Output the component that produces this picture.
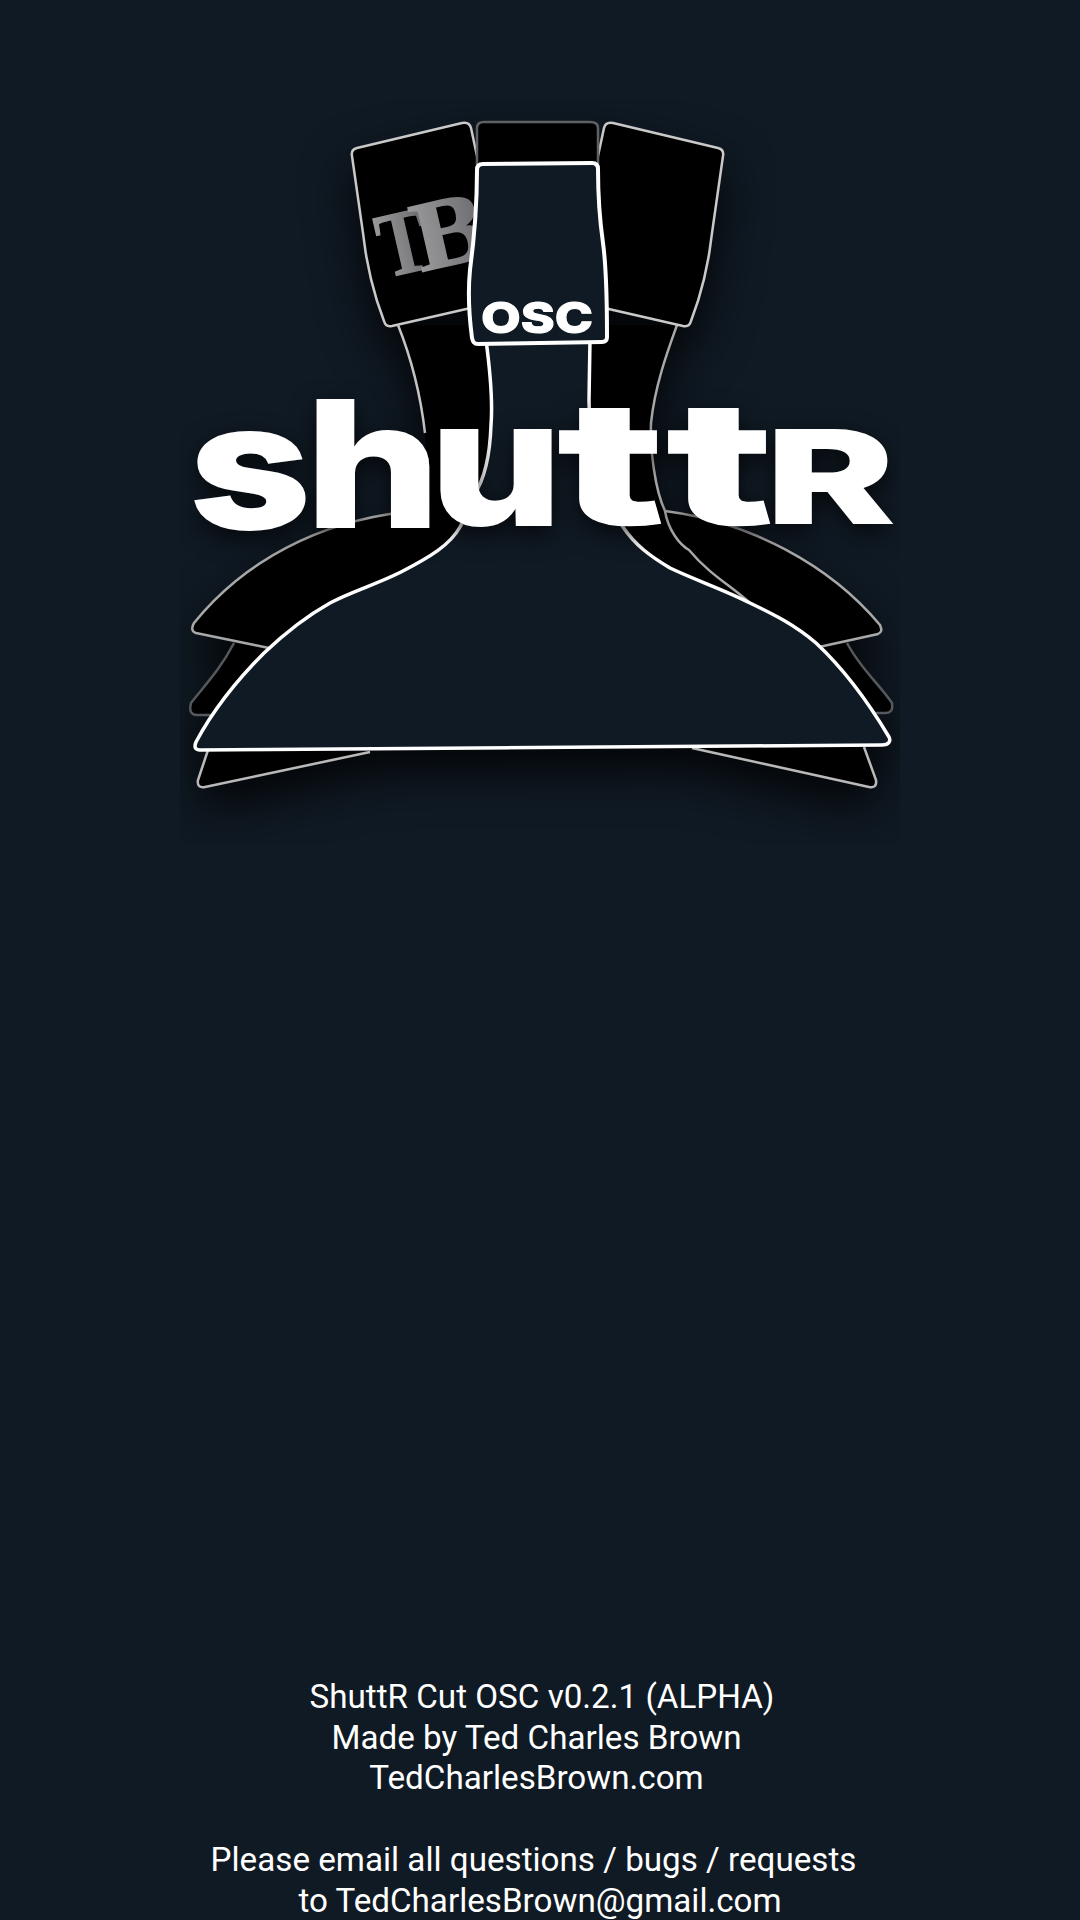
import React from "react";

const BG = "#101a24";

// wordmark letters, each placed and stretched to the logo's box
const LETTERS = [
  { c: "s", x: 189, y: 528, size: 174, w: 122 },
  { c: "h", x: 306, y: 527, size: 174, w: 134 },
  { c: "u", x: 430, y: 525, size: 174, w: 132 },
  { c: "t", x: 558, y: 524, size: 170, w: 106 },
  { c: "t", x: 667, y: 524, size: 170, w: 106 },
  { c: "R", x: 766, y: 523, size: 128, w: 128 },
];

function Logo() {
  return (
    <svg width="1080" height="860" viewBox="0 0 1080 860" className="block">
      <defs>
        <filter
          id="soft"
          filterUnits="userSpaceOnUse"
          x="180"
          y="100"
          width="720"
          height="745"
          colorInterpolationFilters="sRGB"
        >
          <feDropShadow dx="0" dy="22" stdDeviation="24" floodColor="#000" floodOpacity="0.8" />
        </filter>
        <filter
          id="word"
          filterUnits="userSpaceOnUse"
          x="180"
          y="380"
          width="720"
          height="240"
          colorInterpolationFilters="sRGB"
        >
          <feDropShadow dx="0" dy="8" stdDeviation="12" floodColor="#000" floodOpacity="0.7" />
        </filter>
        <linearGradient id="tb" x1="0" y1="0" x2="1" y2="0">
          <stop offset="0" stopColor="#9a9a9c" />
          <stop offset="1" stopColor="#6c6c70" />
        </linearGradient>
      </defs>

      <g filter="url(#soft)">
        {/* lower wings */}
        <path d="M208 748 L198 780 C197 786 200 788 205 787 L370 752 Z" fill="#000" />
        <path d="M370 752 L205 787 C200 788 197 786 198 780 L208 750" fill="none" stroke="#b9b9b9" strokeWidth="2.5" />
        <path d="M864 745 L876 780 C877 786 874 788 869 787 L692 746 Z" fill="#000" />
        <path d="M692 748 L869 787 C874 788 877 786 876 780 L864 747" fill="none" stroke="#b9b9b9" strokeWidth="2.5" />
        <path d="M234 643 C220 670 205 685 191 703 C189 711 191 715 197 715 L225 715 L290 650 Z" fill="#000" />
        <path d="M234 643 C220 670 205 685 191 703 C189 711 191 715 197 715 L225 715" fill="none" stroke="#55585c" strokeWidth="2.5" />
        <path d="M847 643 C860 668 880 685 892 703 C893 710 891 713 885 713 L855 713 L800 650 Z" fill="#000" />
        <path d="M847 643 C860 668 880 685 892 703 C893 710 891 713 885 713 L855 713" fill="none" stroke="#55585c" strokeWidth="2.5" />

        {/* black band behind the body */}
        <path d="M398 325 C408 350 420 390 425 433 L430 512 L404 512 C320 522 245 560 194 623 C191 628 192 632 196 633 L269 650 L500 560 L500 325 Z" fill="#000" />
        <path d="M677 325 C668 350 655 385 651 423 C650 450 655 490 665 511 C750 522 830 565 880 625 C882 630 882 632 878 634 L819 647 L600 560 L585 325 Z" fill="#000" />
        <path d="M398 325 C408 350 420 390 425 433" fill="none" stroke="#c4c4c4" strokeWidth="2.5" />
        <path d="M404 512 C320 522 245 560 194 623 C191 628 192 632 196 633 L269 648" fill="none" stroke="#a8a8a8" strokeWidth="2.5" />
        <path d="M677 325 C668 350 655 385 651 423 C650 450 655 490 665 511 C668 530 680 545 689 550 C710 575 730 585 750 603" fill="none" stroke="#a8a8a8" strokeWidth="2.5" />
        <path d="M665 511 C750 522 830 565 880 625 C882 630 882 632 878 634 L819 647" fill="none" stroke="#a8a8a8" strokeWidth="2.5" />

        {/* top pads */}
        <path d="M352 156 C351 151 353 149 357 148 L462 123 C467 122 470 124 471 128 L480 170 L475 307 L392 326 C387 327 385 325 384 321 C372 290 366 260 363 233 Z" fill="#000" stroke="#c9c9c9" strokeWidth="2.5" strokeLinejoin="round" />
        <path d="M723 156 C724 151 722 149 718 148 L613 123 C608 122 605 124 604 128 L595 170 L600 307 L683 326 C688 327 690 325 691 321 C703 290 709 260 712 233 Z" fill="#000" stroke="#c9c9c9" strokeWidth="2.5" strokeLinejoin="round" />
        <path d="M477 170 L477 128 C477 124 480 122 484 122 L590 122 C595 122 598 124 598 128 L598 170 Z" fill="#000" stroke="#5e6063" strokeWidth="2.5" />

        {/* TB mark, sits under the centre pad */}
        <g transform="rotate(-13 425 232)" fontFamily="'Liberation Serif', serif" fontWeight="700" fill="url(#tb)" stroke="url(#tb)" strokeWidth="1.5">
          <text x="376" y="268" fontSize="92" textLength="50" lengthAdjust="spacingAndGlyphs">T</text>
          <text x="412" y="270" fontSize="100" textLength="74" lengthAdjust="spacingAndGlyphs">B</text>
        </g>

        {/* body */}
        <path
          d="M486 340 C490 370 493 400 491 425 C490 455 484 480 474 495 C468 510 464 520 460 527 C450 545 430 557 401 572 C375 585 350 592 330 603 C305 617 285 633 264 653 C235 682 212 712 196 742 C194 747 195 750 200 750 L882 745 C889 745 891 741 889 737 C870 705 845 670 816 643 C795 625 775 615 750 603 C725 590 695 580 670 568 C650 556 635 545 623 527 C605 500 592 470 590 440 L589 400 L590 340 Z"
          fill={BG}
          stroke="#fff"
          strokeWidth="3.5"
          strokeLinejoin="round"
        />

        {/* centre pad */}
        <path
          d="M477 170 C477 166 479 164 483 164 L592 163 C596 163 598 165 598 169 C598 190 599 215 603 243 C606 265 607 285 607 337 C607 341 605 342 602 342 L478 344 C474 344 473 342 472 338 C469 315 468 290 470 270 C474 240 477 205 477 170 Z"
          fill={BG}
          stroke="#fff"
          strokeWidth="4"
          strokeLinejoin="round"
        />
        <text x="481" y="333" fontSize="43" textLength="112" lengthAdjust="spacingAndGlyphs" fontFamily="'Inter', sans-serif" fontWeight="800" fill="#fff" stroke="#fff" strokeWidth="1">
          OSC
        </text>
      </g>

      {/* wordmark */}
      <g filter="url(#word)" fontFamily="'Inter', sans-serif" fontWeight="800" fill="#fff" stroke="#fff" strokeWidth="2" strokeLinejoin="miter">
        {LETTERS.map((l, i) => (
          <text key={i} x={l.x} y={l.y} fontSize={l.size} textLength={l.w} lengthAdjust="spacingAndGlyphs">
            {l.c}
          </text>
        ))}
      </g>
    </svg>
  );
}

export default function App() {
  return (
    <div className="h-[1920px] overflow-hidden bg-[#101a24] font-['Roboto',sans-serif] text-white">
      <Logo />
      <div className="mt-[817px] text-center text-[33.2px] leading-[40.7px]">
        <p className="pl-[4px]">ShuttR Cut OSC v0.2.1 (ALPHA)</p>
        <p className="pr-[7px]">Made by Ted Charles Brown</p>
        <p className="pr-[7px]">TedCharlesBrown.com</p>
        <p className="mt-[40.7px] pr-[13px]">Please email all questions / bugs / requests</p>
        <p>to TedCharlesBrown@gmail.com</p>
      </div>
    </div>
  );
}
